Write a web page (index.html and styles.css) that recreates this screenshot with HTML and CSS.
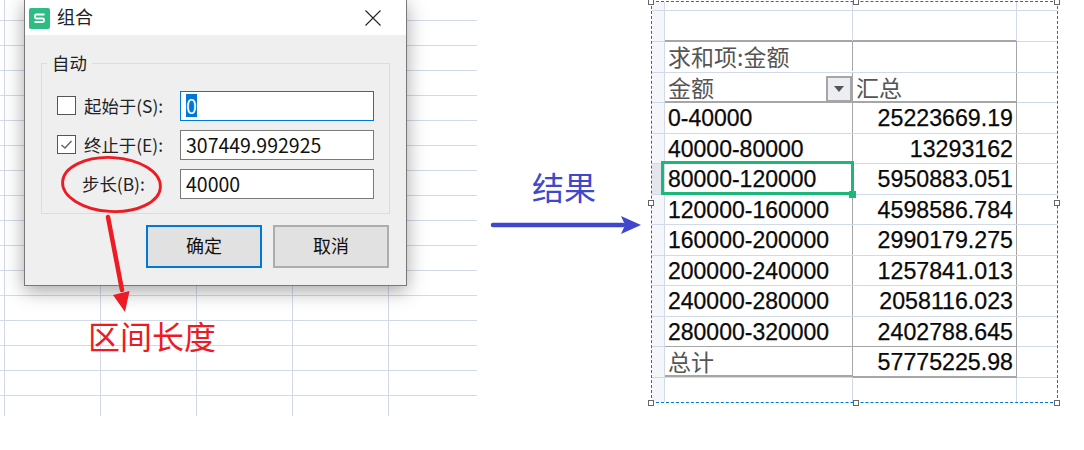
FILE: index.html
```html
<!DOCTYPE html>
<html lang="zh">
<head>
<meta charset="utf-8">
<title>组合</title>
<link rel="stylesheet" href="styles.css">
</head>
<body>
<main class="canvas">
  <div class="grid-sheet"></div>

  <section class="dialog">
    <header class="titlebar">
      <svg class="logo" viewBox="0 0 21 21"><rect width="21" height="21" rx="2" fill="#2dbd84"/><path d="M15.500 6.500H7.200a1.200 1.200 0 0 0-1.200 1.200v1.600a1.200 1.200 0 0 0 1.200 1.200h6.600a1.200 1.200 0 0 1 1.200 1.200v1.100a1.200 1.200 0 0 1-1.200 1.200H5.500" fill="none" stroke="#fff" stroke-width="1.800"/></svg>
      <span class="title">组合</span>
      <svg class="close" viewBox="0 0 16 16"><path d="M.5.5l15 15M15.500.5l-15 15" stroke="#222" stroke-width="1.100" fill="none"/></svg>
    </header>
    <div class="dialog-body">
      <fieldset class="group">
        <legend>自动</legend>
        <div class="field">
          <span class="label"><span class="check"></span>起始于(S):</span>
          <span class="input focused"><span class="selected">0</span></span>
        </div>
        <div class="field">
          <span class="label"><span class="check"><svg viewBox="0 0 17 17"><path d="M3.500 9l3.500 3 6.500-7" fill="none" stroke="#666" stroke-width="1.500"/></svg></span>终止于(E):</span>
          <span class="input">307449.992925</span>
        </div>
        <div class="field">
          <span class="label step">步长(B):</span>
          <span class="input">40000</span>
        </div>
      </fieldset>
      <div class="actions">
        <button class="btn primary">确定</button>
        <button class="btn">取消</button>
      </div>
    </div>
  </section>

  <section class="pivot">
    <div class="row spacer"><span class="rh"></span><span class="c1 plain"></span><span class="c2 plain"></span></div>
    <div class="row blank rule-thick"><span class="rh"></span><span class="c1 plain"></span><span class="c2 plain"></span></div>
    <div class="row tall"><span class="rh"></span><span class="c1 t cjk">求和项:金额</span><span class="c2 t"></span></div>
    <div class="row tall rule-thick"><span class="rh"></span><span class="c1 t cjk">金额<span class="filter"></span></span><span class="c2 t cjk">汇总</span></div>
    <div class="row tall"><span class="rh"></span><span class="c1 t">0-40000</span><span class="c2 t num">25223669.19</span></div>
    <div class="row tall"><span class="rh"></span><span class="c1 t">40000-80000</span><span class="c2 t num">13293162</span></div>
    <div class="row tall"><span class="rh active-rh"></span><span class="c1 t">80000-120000</span><span class="c2 t num">5950883.051</span></div>
    <div class="row tall"><span class="rh"></span><span class="c1 t">120000-160000</span><span class="c2 t num">4598586.784</span></div>
    <div class="row tall"><span class="rh"></span><span class="c1 t">160000-200000</span><span class="c2 t num">2990179.275</span></div>
    <div class="row tall"><span class="rh"></span><span class="c1 t">200000-240000</span><span class="c2 t num">1257841.013</span></div>
    <div class="row tall"><span class="rh"></span><span class="c1 t">240000-280000</span><span class="c2 t num">2058116.023</span></div>
    <div class="row tall rule-thin"><span class="rh"></span><span class="c1 t">280000-320000</span><span class="c2 t num">2402788.645</span></div>
    <div class="row tall rule-thick"><span class="rh"></span><span class="c1 t cjk">总计</span><span class="c2 t num">57775225.98</span></div>
    <div class="row tail"><span class="rh"></span><span class="c1 plain"></span><span class="c2 plain"></span></div>
    <span class="cursor"></span><span class="cursor-dot"></span>
    <span class="handle h-tl"></span><span class="handle h-tm"></span><span class="handle h-tr"></span>
    <span class="handle h-ml"></span><span class="handle h-mr"></span>
    <span class="handle h-bl"></span><span class="handle h-bm"></span><span class="handle h-br"></span>
  </section>

  <svg class="marks" viewBox="0 0 1084 450">
    <ellipse cx="111.500" cy="184.500" rx="49" ry="27" transform="rotate(3 111.500 184.500)" fill="none" stroke="#ed1c24" stroke-width="2.800"/>
    <path d="M108 217l14 73" stroke="#ed1c24" stroke-width="4.500" stroke-linecap="round" fill="none"/>
    <path d="M113 295l16.500-4-4.500 21z" fill="#ed1c24"/>
    <path d="M493 225h130" stroke="#3f48cc" stroke-width="4.500" stroke-linecap="round" fill="none"/>
    <path d="M621 216l20 9-20 9 4-9z" fill="#3f48cc"/>
  </svg>
  <span class="note red">区间长度</span>
  <span class="note blue">结果</span>
</main>
</body>
</html>
```
FILE: styles.css
```css
* { box-sizing: border-box; }
html, body { margin: 0; background: #fff; }
.canvas {
  position: relative;
  width: 1084px;
  height: 450px;
  overflow: hidden;
  font-family: "Noto Sans CJK SC", "Noto Sans", sans-serif;
  color: #222;
}

/* background spreadsheet */
.grid-sheet {
  position: absolute;
  left: 0;
  top: 0;
  width: 477px;
  height: 416px;
  background-image:
    linear-gradient(#d2d9e8 1px, transparent 1px),
    linear-gradient(90deg, #d2d9e8 1px, transparent 1px);
  background-size: 100% 25px, 96px 100%;
  background-position: 0 20px, 4px 0;
}

/* dialog */
.dialog {
  position: absolute;
  left: 24px;
  top: -1px;
  width: 383px;
  height: 287px;
  border: 1px solid #787878;
  background: #efefef;
  box-shadow: 0 5px 18px rgba(0, 0, 0, .35);
}
.titlebar {
  display: flex;
  align-items: center;
  height: 35px;
  padding-left: 4px;
  background: #fff;
}
.logo { width: 21px; height: 21px; margin-top: 1px; }
.title { margin-left: 7px; padding-bottom: 3px; font-size: 18px; line-height: 24px; }
.close { width: 16px; height: 16px; margin-left: auto; margin-right: 25px; margin-top: 1px; }
.dialog-body { padding: 28px 17px 0 16px; }
.group {
  position: relative;
  margin: 0;
  padding: 27px 15px 0;
  width: 349px;
  height: 151px;
  border: 1px solid #dcdcdc;
}
.group legend {
  position: absolute;
  left: 5px;
  top: -12px;
  padding: 0 5px;
  background: #efefef;
  font-size: 17.400px;
  line-height: 22px;
}
.field {
  display: flex;
  align-items: center;
  height: 30px;
  margin-bottom: 9px;
}
.label {
  display: flex;
  align-items: center;
  width: 123px;
  padding-bottom: 2px;
  font-size: 17.400px;
  white-space: nowrap;
}
.label.step { padding-left: 25px; }
.check {
  flex: none;
  width: 19px;
  height: 19px;
  margin-right: 8px;
  border: 1px solid #555;
  background: #fff;
}
.check svg { display: block; width: 17px; height: 17px; }
.input {
  width: 194px;
  height: 30px;
  padding-left: 5px;
  border: 1px solid #7a7a7a;
  background: #fff;
  font-size: 19.500px;
  line-height: 27px;
  color: #111;
}
.input.focused { border-color: #0078d7; }
.selected {
  display: inline-block;
  width: 11px;
  height: 23px;
  margin-top: 2px;
  background: #0078d7;
  color: #fff;
  line-height: 23px;
  vertical-align: top;
}
.actions {
  display: flex;
  justify-content: flex-end;
  gap: 11px;
  margin-top: 11px;
}
.btn {
  width: 116px;
  height: 43px;
  padding: 0 0 4px;
  border: 2px solid #adadad;
  background: #e1e1e1;
  font: 18px "Noto Sans CJK SC", sans-serif;
  color: #111;
}
.btn.primary { border-color: #0078d7; }

/* pivot table */
.pivot {
  position: absolute;
  left: 651px;
  top: 1px;
  width: 407px;
  height: 402px;
  border: 1px dashed #0078d7;
  font-family: "Liberation Sans", "Noto Sans CJK SC", sans-serif;
  font-size: 23px;
  color: #0a0a0a;
  -webkit-text-stroke: .25px #0a0a0a;
}
.row {
  display: grid;
  grid-template-columns: 13px 188px 164px 1fr;
  border-bottom: 1px solid #d2d9e8;
}
.row > span { min-width: 0; border-right: 1px solid #a6a6a6; }
.row > .rh { background: #f4f6fa; border-right-color: #d2d9e8; }
.row > .plain { border-right-color: #d2d9e8; }
.row > .active-rh { background: #e3e6ec; }
.spacer { height: 9px; }
.blank { height: 31px; }
.tall { height: 30.550px; }
.tail { height: 24px; border-bottom: 0; }
.t { padding: 1px 3px 0; line-height: 28px; white-space: nowrap; }
.c1.t { position: relative; }
.cjk {
  height: 29px;
  font-family: "Noto Sans CJK SC", sans-serif;
  color: #555;
  -webkit-text-stroke: 0;
}
.row > .cjk { line-height: 26px; }
.num { padding-right: 3px; font-size: 23.200px; text-align: right; }
.rule-thin > .c1, .rule-thin > .c2 { box-shadow: 0 1px 0 #a6a6a6; }
.rule-thick > .c1, .rule-thick > .c2 { box-shadow: 0 1px 0 #a6a6a6, inset 0 -1px 0 #a6a6a6; }
.filter {
  position: absolute;
  right: 0;
  top: 3px;
  width: 26px;
  height: 26px;
  border: 2px solid #a6a6a6;
  background: #eceef2;
}
.filter::after {
  content: "";
  position: absolute;
  left: 6px;
  top: 8px;
  border-left: 5.500px solid transparent;
  border-right: 5.500px solid transparent;
  border-top: 6px solid #555;
}
.cursor {
  position: absolute;
  left: 9px;
  top: 159px;
  width: 193px;
  height: 34px;
  border: 3px solid #1eb77a;
}
.cursor-dot {
  position: absolute;
  left: 197px;
  top: 189px;
  width: 7px;
  height: 7px;
  background: #1eb77a;
}
.handle {
  position: absolute;
  width: 6px;
  height: 6px;
  border: 1px solid #666;
  background: #fff;
}
.h-tl { left: -4px; top: -3px; }
.h-tm { left: 201px; top: -3px; }
.h-tr { left: 402px; top: -3px; }
.h-ml { left: -4px; top: 198px; }
.h-mr { left: 402px; top: 198px; }
.h-bl { left: -4px; top: 398px; }
.h-bm { left: 201px; top: 398px; }
.h-br { left: 402px; top: 398px; }

/* annotations */
.marks {
  position: absolute;
  left: 0;
  top: 0;
  width: 1084px;
  height: 450px;
  pointer-events: none;
}
.note {
  position: absolute;
  font-size: 32px;
  line-height: 40px;
  white-space: nowrap;
}
.note.red { left: 88px; top: 315px; color: #ed1c24; }
.note.blue { left: 532px; top: 166px; color: #3f48cc; }
```
